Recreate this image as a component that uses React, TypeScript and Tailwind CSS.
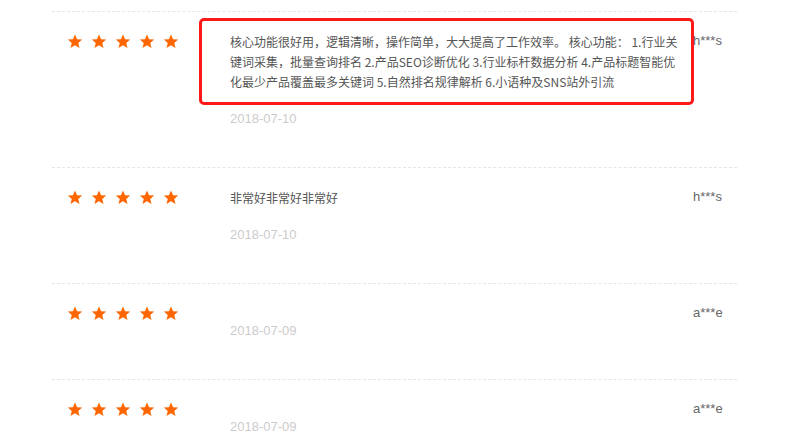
import React from 'react';

interface Review {
  lines: string[];
  date: string;
  user: string;
}

const reviews: Review[] = [
  {
    lines: [
      '核心功能很好用，逻辑清晰，操作简单，大大提高了工作效率。 核心功能： 1.行业关',
      '键词采集，批量查询排名 2.产品SEO诊断优化 3.行业标杆数据分析 4.产品标题智能优',
      '化最少产品覆盖最多关键词 5.自然排名规律解析 6.小语种及SNS站外引流',
    ],
    date: '2018-07-10',
    user: 'h***s',
  },
  { lines: ['非常好非常好非常好'], date: '2018-07-10', user: 'h***s' },
  { lines: [], date: '2018-07-09', user: 'a***e' },
  { lines: [], date: '2018-07-09', user: 'a***e' },
];

const Star = () => (
  <svg width="16" height="15" viewBox="0 0 24 23" className="shrink-0">
    <path
      d="M12 0.6l3.1 7.4 7.9 0.6-6 5.2 1.9 7.8L12 17.4l-6.9 4.2 1.9-7.8-6-5.2 7.9-0.6z"
      fill="#ff6600"
    />
  </svg>
);

export default function App() {
  return (
    <div className="relative w-[800px] h-[443px] overflow-hidden bg-white">
      <div className="ml-[52px] w-[685px] pt-[11px]">
        {reviews.map((r, i) => (
          <div key={i} className="flex border-t border-dashed border-[#e6e6e6] pt-[20px] pb-[38px]">
            {/* stars */}
            <div className="w-[178px] pl-[15px] h-5 flex items-center gap-[8px] -mt-[1px]">
              {[0, 1, 2, 3, 4].map((s) => (
                <Star key={s} />
              ))}
            </div>

            {/* content + date */}
            <div className="w-[463px]">
              {r.lines.length > 0 && (
                <p className="text-[12px] leading-[20px] text-[#555] whitespace-pre font-['Noto_Sans_CJK_SC','Microsoft_YaHei',sans-serif]">
                  {r.lines.map((l, j) => (
                    <span key={j} className="block">
                      {l}
                    </span>
                  ))}
                </p>
              )}
              <div className="mt-[17px] text-[13px] leading-[20px] text-[#cccccc] font-['Liberation_Sans',Arial,sans-serif]">
                {r.date}
              </div>
            </div>

            {/* user */}
            <div className="text-[13px] leading-[20px] -mt-[1px] text-[#666] font-['Liberation_Sans',Arial,sans-serif]">
              {r.user}
            </div>
          </div>
        ))}
      </div>

      {/* annotation box */}
      <div className="absolute left-[199px] top-[18px] w-[495px] h-[87px] border-[3px] border-[#ff1a1a] rounded-[5px]" />
    </div>
  );
}
